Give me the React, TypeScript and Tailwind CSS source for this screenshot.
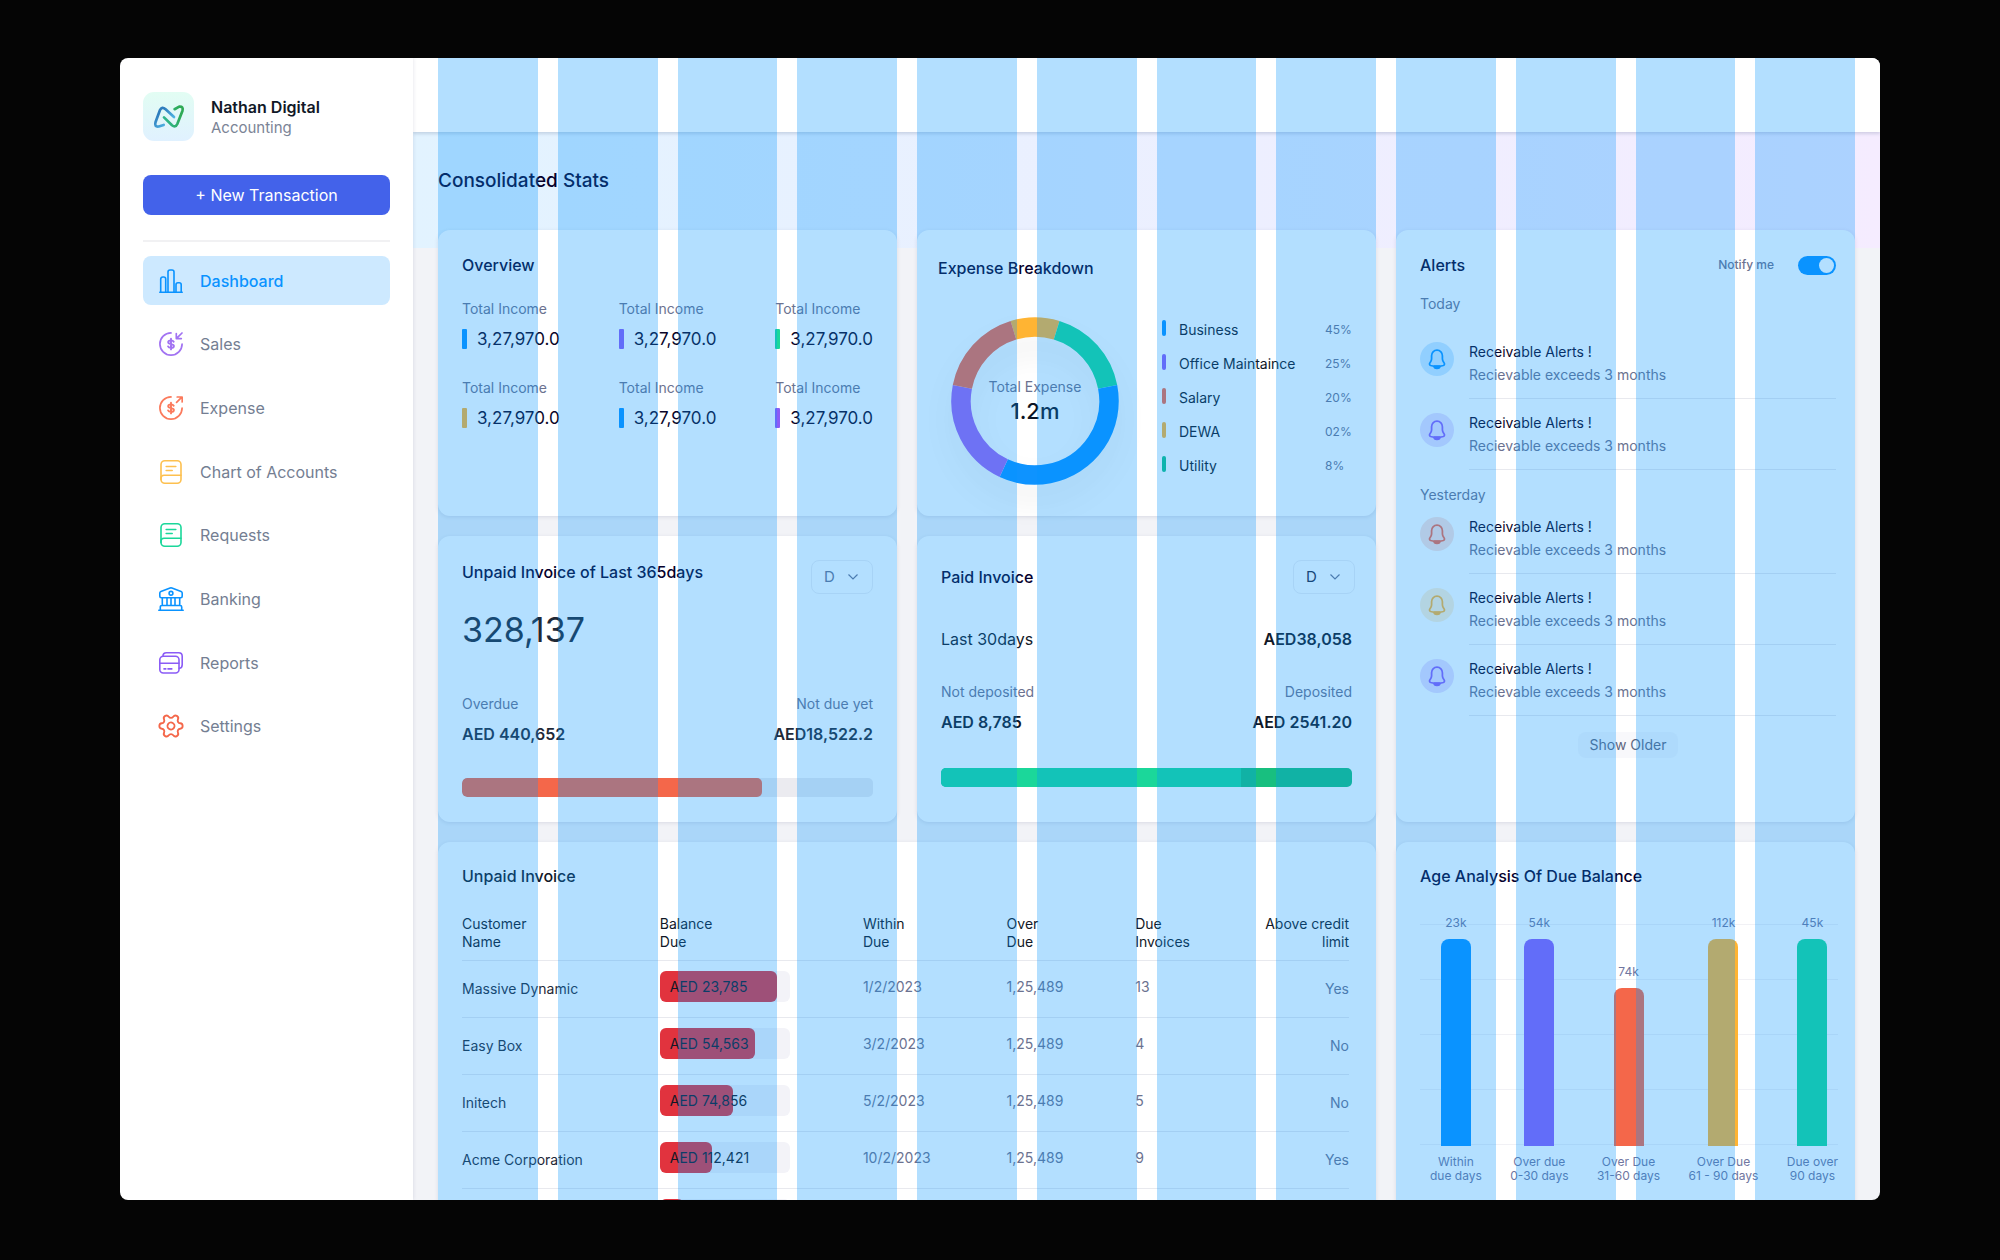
import React from "react";
import { Settings } from "lucide-react";

type IconProps = { className?: string };

function Logo() {
  return (
    <svg viewBox="0 0 51 49" className="h-[49px] w-[51px] shrink-0" fill="none" aria-hidden="true">
      <defs>
        <linearGradient id="tile" x1="0" y1="0" x2="0" y2="1">
          <stop offset="0" stopColor="#e2fdf3" />
          <stop offset="1" stopColor="#e0f1ff" />
        </linearGradient>
        <linearGradient id="left" gradientUnits="userSpaceOnUse" x1="14" y1="18" x2="28" y2="32">
          <stop offset="0.2" stopColor="#2f7dbd" />
          <stop offset="1" stopColor="#55bdea" />
        </linearGradient>
        <linearGradient id="right" gradientUnits="userSpaceOnUse" x1="22" y1="24" x2="38" y2="20">
          <stop offset="0" stopColor="#2fb58a" />
          <stop offset="1" stopColor="#2faa55" />
        </linearGradient>
      </defs>
      <rect width="51" height="49" rx="11" fill="url(#tile)" />
      <g strokeWidth="2.7" strokeLinecap="round" strokeLinejoin="round">
        <path d="M31 25 22.6 17.2Q18.8 14 17 18L12.6 30Q11 35.2 15.8 34.5L20.7 33" stroke="url(#left)" />
        <path d="M21 25.4 29 33.2Q32.4 36 34.3 32L39.4 19Q40.8 14.2 36.2 14.6L31.6 17.2" stroke="url(#right)" />
      </g>
    </svg>
  );
}

function BarsIcon({ className }: IconProps) {
  return (
    <svg viewBox="0 0 24 24" className={className} fill="none" stroke="currentColor" strokeWidth="1.6" strokeLinecap="round">
      <path d="M0.8 23.2h22.4M1.700 23V10a2 2 0 0 1 2-2h1a2 2 0 0 1 2 2v13M9 23V3a2 2 0 0 1 2-2h2a2 2 0 0 1 2 2v20M17 23v-7.300a2 2 0 0 1 2-2h1.200a2 2 0 0 1 2 2V23" />
    </svg>
  );
}

function CoinIcon({ className, out }: IconProps & { out?: boolean }) {
  return (
    <svg viewBox="0 0 24 24" className={className} fill="none" stroke="currentColor" strokeWidth="1.7" strokeLinecap="round" strokeLinejoin="round">
      <path d="M12 0.9A11.1 11.1 0 1 0 23.1 12" />
      <path d="M14.7 9.7c-.5-.9-1.5-1.3-2.7-1.3-1.6 0-2.8.7-2.8 1.9 0 2.6 5.7 1 5.7 3.7 0 1.200-1.200 1.900-2.900 1.900-1.400 0-2.500-.5-2.900-1.500M12 6.800v10.600" strokeWidth="1.900" />
      {out ? <path d="M17.600 6.400 22.800 1.200M18.200 1h5v5" /> : <path d="M23 1 17.800 6.200M17.300 1.600v5h5" />}
    </svg>
  );
}

function BookIcon({ className }: IconProps) {
  return (
    <svg viewBox="0 0 24 24" className={className} fill="none" stroke="currentColor" strokeWidth="1.600" strokeLinecap="round">
      <rect x="2" y="0.800" width="20" height="22.400" rx="3.800" />
      <path d="M2 19.500v-1.500a3 3 0 0 1 3-2.800h17M7.200 6.500h9.600M7.200 10.500h6" />
    </svg>
  );
}

function BankIcon({ className }: IconProps) {
  return (
    <svg viewBox="0 0 26 24" className={className} fill="none" stroke="currentColor" strokeWidth="1.600" strokeLinecap="round" strokeLinejoin="round">
      <path d="M0.800 23.200h24.400M2.300 23v-3a1.500 1.500 0 0 1 1.500-1.500h18.400a1.500 1.500 0 0 1 1.500 1.500v3M4.300 11v7.500M9 11v7.500M13 11v7.500M17 11v7.500M21.700 11v7.500" />
      <path d="M1.800 9.200V6.100c0-.8.400-1.300 1.100-1.600l9.200-3.500c.6-.2 1.200-.2 1.800 0l9.200 3.500c.7.300 1.100.8 1.100 1.600v3.100c0 .9-.6 1.500-1.500 1.500H3.300c-.9 0-1.500-.6-1.500-1.500z" />
      <circle cx="13" cy="6.300" r="1.900" />
    </svg>
  );
}

function CardsIcon({ className }: IconProps) {
  return (
    <svg viewBox="0 0 24 24" className={className} fill="none" stroke="currentColor" strokeWidth="1.600" strokeLinecap="round">
      <rect x="0.800" y="5.300" width="19.200" height="16.700" rx="3.500" />
      <path d="M4 5.200c0-2.300 1-3.500 3.400-3.500h12.300c2.500 0 3.500 1 3.500 3.500v8.500c0 2.300-.8 3.500-3 3.600M0.900 12.300h19M5 17.900h1.800M9 17.900h3.800" />
    </svg>
  );
}

function GearIcon({ className }: IconProps) {
  return (
    <span className={className}>
      <Settings className="-m-0.5 h-7 w-7 rotate-30" strokeWidth={1.6} />
    </span>
  );
}

function BellIcon({ className }: IconProps) {
  return (
    <svg viewBox="0 0 24 24" className={className} fill="none" stroke="currentColor" strokeWidth="1.900" strokeLinecap="round" strokeLinejoin="round">
      <path d="M12 2.400c-3.500 0-5.900 2.700-5.900 6V11.800c0 1-.4 2.100-.9 3l-1.100 1.700c-.6 1.100-.2 2.200 1 2.600 4.400 1.300 9.400 1.300 13.800 0 1.200-.4 1.600-1.600 1-2.600l-1.100-1.700c-.5-.9-.9-2-.9-3V8.400c0-3.300-2.400-6-5.900-6z" />
      <path d="M8.800 19.900h6.400a3.200 2.400 0 0 1-6.400 0z" fill="currentColor" />
    </svg>
  );
}

const nav = [
  { label: "Dashboard", color: "text-[#0a93ff]", icon: <BarsIcon className="h-6 w-6" />, active: true },
  { label: "Sales", color: "text-[#a273f2]", icon: <CoinIcon className="h-6 w-6" /> },
  { label: "Expense", color: "text-[#fb7a5c]", icon: <CoinIcon className="h-6 w-6" out /> },
  { label: "Chart of Accounts", color: "text-[#fdc04f]", icon: <BookIcon className="h-6 w-6" /> },
  { label: "Requests", color: "text-[#1bd79a]", icon: <BookIcon className="h-6 w-6" /> },
  { label: "Banking", color: "text-[#0a93ff]", icon: <BankIcon className="h-6 w-[26px]" /> },
  { label: "Reports", color: "text-[#8b5cf6]", icon: <CardsIcon className="h-6 w-6" /> },
  { label: "Settings", color: "text-[#f4674a]", icon: <GearIcon className="block h-6 w-6" /> },
];

function Sidebar() {
  return (
    <aside className="z-10 w-[293px] shrink-0 bg-white px-[23px] pt-[34px] shadow-[0_0_4px_rgba(40,40,90,0.14)]">
      <div className="flex items-center gap-[17px]">
        <Logo />
        <div>
          <p className="text-base leading-[22px] font-semibold text-[#111827]">Nathan Digital</p>
          <p className="text-[15px] leading-5 text-[#7b8496]">Accounting</p>
        </div>
      </div>
      <button className="mt-[34px] h-10 w-full rounded-lg bg-[#4362ea] text-base text-white">+ New Transaction</button>
      <hr className="mt-[25px] border-t-2 border-[#f1f1f3]" />
      <nav className="mt-[14px] flex h-[495px] flex-col justify-between">
        {nav.map((n) => (
          <a
            key={n.label}
            href="#"
            className={
              n.active
                ? "flex h-[49px] items-center rounded-lg bg-[#cde9ff] pl-[15px] font-medium text-[#0a93ff]"
                : "flex h-[49px] items-center rounded-lg pl-[15px] text-[#747e92]"
            }
          >
            <span className={n.color + " flex w-[26px] justify-center"}>{n.icon}</span>
            <span className="ml-4 text-base">{n.label}</span>
          </a>
        ))}
      </nav>
    </aside>
  );
}

function Card({ className, children }: { className: string; children: React.ReactNode }) {
  return <section className={"rounded-xl bg-white shadow-[0_1px_4px_rgba(40,40,90,0.12)] " + className}>{children}</section>;
}

function Title({ children }: { children: React.ReactNode }) {
  return <h2 className="text-base leading-6 font-medium text-[#05002c]">{children}</h2>;
}

const stats = ["bg-[#0e93ff]", "bg-[#8b5cf6]", "bg-[#1bd79a]", "bg-[#ffb433]", "bg-[#0e93ff]", "bg-[#8b5cf6]"];

function Overview() {
  return (
    <Card className="col-span-4 px-6 pt-[23px]">
      <Title>Overview</Title>
      <div className="mt-[22px] grid grid-cols-[auto_auto_auto] justify-between gap-y-[29px]">
        {stats.map((c, i) => (
          <div key={i}>
            <p className="text-sm leading-5 text-[#6b7290]">Total Income</p>
            <p className="mt-[10px] flex items-center text-[17px] leading-5 text-[#0a0528]">
              <span className={c + " mr-[10px] h-5 w-[5px] rounded-[1px]"} />
              3,27,970.0
            </p>
          </div>
        ))}
      </div>
    </Card>
  );
}

const slices = [
  { from: -17, to: 17, color: "#ffb433" },
  { from: 17, to: 79, color: "#1bd79a" },
  { from: 79, to: 205, color: "#0e93ff" },
  { from: 205, to: 281, color: "#9c64f0" },
  { from: 281, to: 343, color: "#f4674a" },
];

const legend = [
  { name: "Business", pct: "45%", color: "bg-[#0e93ff]" },
  { name: "Office Maintaince", pct: "25%", color: "bg-[#8b5cf6]" },
  { name: "Salary", pct: "20%", color: "bg-[#f4674a]" },
  { name: "DEWA", pct: "02%", color: "bg-[#ffb433]" },
  { name: "Utility", pct: "8%", color: "bg-[#14c08c]" },
];

function Expense() {
  return (
    <Card className="col-span-4 pl-[21px] pr-[27px] pt-[26px]">
      <Title>Expense Breakdown</Title>
      <div className="mt-[33px] flex pl-[13px]">
        <div className="mt-1 grid h-[168px] w-[168px] shrink-0 place-items-center">
          <svg viewBox="0 0 168 168" className="h-full w-full drop-shadow-[0_18px_14px_rgba(0,0,0,0.05)] [grid-area:1/1]" fill="none" aria-hidden="true">
            {slices.map((s) => (
              <circle
                key={s.from}
                cx="84"
                cy="84"
                r="74"
                stroke={s.color}
                strokeWidth="19.500"
                pathLength={360}
                strokeDasharray={`${s.to - s.from} 360`}
                transform={`rotate(${s.from - 90} 84 84)`}
              />
            ))}
          </svg>
          <p className="text-center [grid-area:1/1]">
            <span className="block text-sm leading-5 text-[#6b7290]">Total Expense</span>
            <span className="block text-[22px] leading-7 font-medium text-[#0c1424]">1.2m</span>
          </p>
        </div>
        <ul className="ml-[43px] flex-1">
          {legend.map((l) => (
            <li key={l.name} className="flex h-[34px] items-center">
              <span className={l.color + " mb-[5px] h-4 w-1 rounded-xs"} />
              <span className="ml-[13px] text-sm whitespace-nowrap text-[#0d1526]">{l.name}</span>
              <span className="ml-auto w-6 text-xs text-[#6b7290]">{l.pct}</span>
            </li>
          ))}
        </ul>
      </div>
    </Card>
  );
}

function Alert({ tint }: { tint: string }) {
  return (
    <li className="flex h-[71px]">
      <span className={tint + " mt-[14px] grid h-[34px] w-[34px] shrink-0 place-items-center rounded-full"}>
        <BellIcon className="h-[22px] w-[22px]" />
      </span>
      <div className="ml-[15px] flex-1 border-b border-[#e8e9ee] pt-3 text-sm leading-[23px]">
        <p className="text-[#0a0528]">Receivable Alerts !</p>
        <p className="text-[#6b7290]">Recievable exceeds 3 months</p>
      </div>
    </li>
  );
}

function Alerts() {
  return (
    <Card className="col-span-4 row-span-2 flex flex-col pl-6 pr-[19px] pt-[23px]">
      <div className="flex items-center">
        <Title>Alerts</Title>
        <label htmlFor="notify" className="ml-auto text-xs font-medium text-[#6b7290]">
          Notify me
        </label>
        <input
          id="notify"
          type="checkbox"
          defaultChecked
          className="ml-6 h-[19px] w-[38px] appearance-none rounded-full bg-gray-300 p-0.5 before:block before:h-[15px] before:w-[15px] before:rounded-full before:bg-white checked:bg-[#0e93ff] checked:before:ml-auto"
        />
      </div>
      <h3 className="mt-[19px] mb-4 text-sm leading-4 text-[#6b7290]">Today</h3>
      <ul>
        <Alert tint="bg-[#0e93ff]/20 text-[#0e93ff]" />
        <Alert tint="bg-[#8b5cf6]/20 text-[#8b5cf6]" />
      </ul>
      <h3 className="pt-[17px] text-sm leading-4 text-[#6b7290]">Yesterday</h3>
      <ul>
        <Alert tint="bg-[#f4674a]/20 text-[#f4674a]" />
        <Alert tint="bg-[#ffb433]/20 text-[#ffb433]" />
        <Alert tint="bg-[#8b5cf6]/20 text-[#8b5cf6]" />
      </ul>
      <button className="mt-4 h-[26px] self-center rounded-lg bg-[#f8f8fb] px-3 text-sm text-[#5f6780]">Show Older</button>
    </Card>
  );
}

function PeriodSelect({ label, className }: { label: string; className: string }) {
  return (
    <div className="grid h-[34px] w-[62px] shrink-0 items-center">
      <select
        aria-label={label}
        className={"h-full w-full appearance-none rounded-lg border border-[#eeeef3] pl-3 text-[15px] [grid-area:1/1] " + className}
      >
        <option>D</option>
      </select>
      <svg viewBox="0 0 10 6" className="pointer-events-none mr-[15px] h-[6px] w-[10px] justify-self-end text-[#6b7290] [grid-area:1/1]" fill="none" stroke="currentColor" strokeWidth="1.200" aria-hidden="true">
        <path d="M0.500 0.500 5 5l4.500-4.500" />
      </svg>
    </div>
  );
}

function UnpaidYear() {
  return (
    <Card className="col-span-4 px-6 pt-6">
      <div className="flex justify-between">
        <Title>Unpaid Invoice of Last 365days</Title>
        <PeriodSelect label="Unpaid period" className="text-[#6b7290]" />
      </div>
      <p className="mt-4 text-[34px] leading-10 text-[#1f2937]">328,137</p>
      <div className="mt-11 flex justify-between text-sm leading-5 text-[#6b7290]">
        <span>Overdue</span>
        <span>Not due yet</span>
      </div>
      <div className="mt-2 flex justify-between text-base leading-6 font-semibold text-[#1f2937]">
        <span>AED 440,652</span>
        <span>AED18,522.2</span>
      </div>
      <div className="mt-8 h-[19px] overflow-hidden rounded-[5px] bg-[#ebebf0]">
        <div className="h-full w-[73%] rounded-[5px] bg-[#f4674a]" />
      </div>
    </Card>
  );
}

function Paid() {
  return (
    <Card className="col-span-4 px-6 pt-6">
      <div className="-mr-[3px] flex items-center justify-between">
        <Title>Paid Invoice</Title>
        <PeriodSelect label="Paid period" className="text-[#1f2540]" />
      </div>
      <div className="mt-[33px] flex justify-between text-base leading-6 text-[#111827]">
        <span>Last 30days</span>
        <span className="font-semibold">AED38,058</span>
      </div>
      <div className="mt-[31px] flex justify-between text-sm leading-5 text-[#6b7290]">
        <span>Not deposited</span>
        <span>Deposited</span>
      </div>
      <div className="mt-2 flex justify-between text-base leading-6 font-semibold text-[#111827]">
        <span>AED 8,785</span>
        <span>AED 2541.20</span>
      </div>
      <div className="mt-[34px] h-[19px] overflow-hidden rounded-[5px] bg-[#18bf7f]">
        <div className="h-full w-[73%] bg-[#1bd79a]" />
      </div>
    </Card>
  );
}

const rows = [
  { name: "Massive Dynamic", due: "AED 23,785", pct: 90, date: "1/2/2023", over: "1,25,489", count: "13", above: "Yes" },
  { name: "Easy Box", due: "AED 54,563", pct: 73, date: "3/2/2023", over: "1,25,489", count: "4", above: "No" },
  { name: "Initech", due: "AED 74,856", pct: 56, date: "5/2/2023", over: "1,25,489", count: "5", above: "No" },
  { name: "Acme Corporation", due: "AED 112,421", pct: 40, date: "10/2/2023", over: "1,25,489", count: "9", above: "Yes" },
  { name: "", due: "", pct: 19, date: "", over: "", count: "", above: "" },
];

function UnpaidTable() {
  return (
    <Card className="col-span-8 pl-6 pr-[27px] pt-[22px]">
      <h2 className="text-base leading-6 font-medium text-[#111827]">Unpaid Invoice</h2>
      <table className="mt-[27px] w-full table-fixed text-left text-sm">
        <colgroup>
          <col className="w-[22.3%]" />
          <col className="w-[22.9%]" />
          <col className="w-[16.2%]" />
          <col className="w-[14.5%]" />
          <col className="w-[9%]" />
          <col />
        </colgroup>
        <thead className="align-top leading-[18px] text-[#111827] [&_th]:pb-[9px] [&_th]:font-normal">
          <tr className="border-b border-[#e8e9ee]">
            <th>Customer<br />Name</th>
            <th>Balance<br />Due</th>
            <th>Within<br />Due</th>
            <th>Over<br />Due</th>
            <th>Due<br />Invoices</th>
            <th className="text-right">Above credit<br />limit</th>
          </tr>
        </thead>
        <tbody className="align-top leading-[31px] text-[#6b7290]">
          {rows.map((r, i) => (
            <tr key={i} className="h-[57px] border-b border-[#e8e9ee]">
              <td className="pt-3 text-[#1f2937]">{r.name}</td>
              <td className="pt-[10px]">
                <div className="grid h-[31px] w-[130px] rounded-md bg-[#f3f3f8]">
                  <div className="rounded-md bg-[#e1333e] [grid-area:1/1]" style={{ width: `${r.pct}%` }} />
                  <span className="pl-[10px] text-[#111827] [grid-area:1/1]">{r.due}</span>
                </div>
              </td>
              <td className="pt-[10px]">{r.date}</td>
              <td className="pt-[10px]">{r.over}</td>
              <td className="pt-[10px]">{r.count}</td>
              <td className="pt-3 text-right">{r.above}</td>
            </tr>
          ))}
        </tbody>
      </table>
    </Card>
  );
}

const ages = [
  { value: "23k", height: 207, color: "bg-[#0e93ff]", a: "Within", b: "due days" },
  { value: "54k", height: 207, color: "bg-[#8b5cf6]", a: "Over due", b: "0-30 days" },
  { value: "74k", height: 158, color: "bg-[#f4674a]", a: "Over Due", b: "31-60 days" },
  { value: "112k", height: 207, color: "bg-[#ffb433]", a: "Over Due", b: "61 - 90 days" },
  { value: "45k", height: 207, color: "bg-[#1bd79a]", a: "Due over", b: "90 days" },
];

function AgeAnalysis() {
  return (
    <Card className="col-span-4 pl-6 pr-[17px] pt-[22px]">
      <Title>Age Analysis Of Due Balance</Title>
      <div className="mt-[25px] grid">
        <div className="mt-[11px] flex h-[221px] flex-col justify-between [grid-area:1/1]">
          {[0, 1, 2, 3, 4].map((i) => (
            <hr key={i} className="border-[#f1f1f5]" />
          ))}
        </div>
        <div className="flex items-end justify-between pl-[10px] text-center text-xs text-[#6f76a0] [grid-area:1/1]">
          {ages.map((b) => (
            <div key={b.value} className="flex flex-col items-center">
              <span className="leading-5">{b.value}</span>
              <div className={b.color + " mt-[6px] w-[30px] rounded-t-lg"} style={{ height: b.height }} />
              <p className="mt-[9px] leading-[14px]">
                {b.a}
                <br />
                {b.b}
              </p>
            </div>
          ))}
        </div>
      </div>
    </Card>
  );
}

function ColumnGuides() {
  return (
    <div aria-hidden="true" className="pointer-events-none absolute inset-0 grid grid-cols-12 gap-5 px-[25px]">
      {Array.from({ length: 12 }, (_, i) => (
        <div key={i} className="bg-[rgba(4,150,255,0.3)]" />
      ))}
    </div>
  );
}

export default function App() {
  return (
    <div className="h-screen bg-[#050505] px-[120px] pt-[58px] pb-[60px] font-['Inter',sans-serif]">
      <div className="flex h-full overflow-hidden rounded-lg">
        <Sidebar />
        <main className="relative flex-1 overflow-hidden bg-[#f2f3f7]">
          <header className="relative h-[74px] bg-white shadow-[0_2px_3px_rgba(50,70,110,0.18)]" />
          <div className="bg-linear-to-r from-[#e2f3ff] to-[#f5ecff] bg-[length:100%_116px] bg-no-repeat px-[25px]">
            <h1 className="py-[37px] text-[19px] leading-6 font-medium text-[#05002c]">Consolidated Stats</h1>
            <div className="grid auto-rows-[minmax(286px,auto)] grid-cols-12 gap-5">
              <Overview />
              <Expense />
              <Alerts />
              <UnpaidYear />
              <Paid />
              <UnpaidTable />
              <AgeAnalysis />
            </div>
          </div>
          <ColumnGuides />
        </main>
      </div>
    </div>
  );
}
